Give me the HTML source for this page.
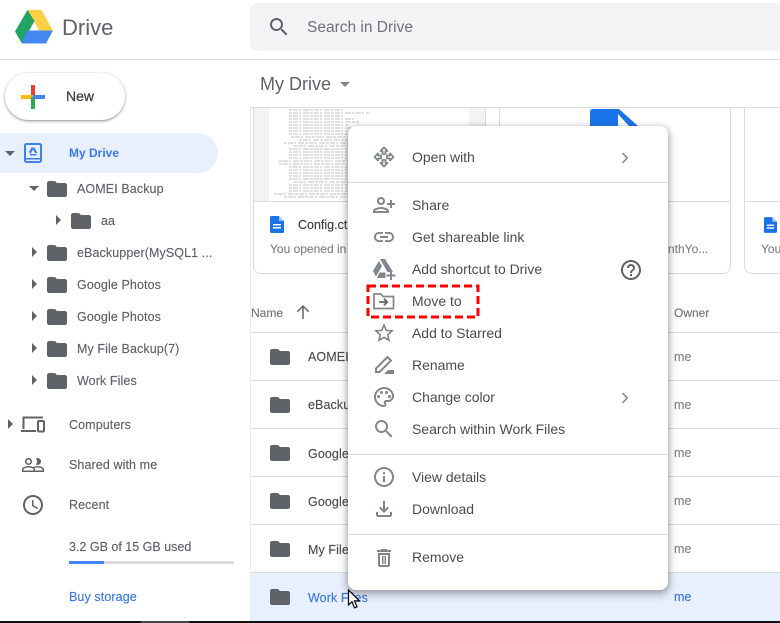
<!DOCTYPE html>
<html><head><meta charset="utf-8">
<style>
html,body{margin:0;padding:0;background:#fff}
#p{position:relative;width:780px;height:623px;overflow:hidden;background:#fff;font-family:"Liberation Sans",sans-serif;font-size:13px;color:#5f6368}
#p div,#p span,#p svg{position:absolute}
.t{line-height:18px;height:18px;white-space:nowrap;-webkit-text-stroke:.15px currentColor}
.s{font-size:12.500px;letter-spacing:.1px}
.m{font-size:14px;color:#4a4d50;left:412px;letter-spacing:-.03px;-webkit-text-stroke:0}
.l{background:#dadce0}
.ic{width:24px;height:24px;fill:#80868b}
.f{width:24px;height:24px;fill:#5f6368}
.tri{width:0;height:0;border-top:5px solid transparent;border-bottom:5px solid transparent;border-left:5px solid #5f6368}
.trd{width:0;height:0;border-left:5px solid transparent;border-right:5px solid transparent;border-top:5px solid #5f6368}
</style></head><body><div id="p">

<!-- header -->
<svg style="left:15px;top:10px" width="38" height="34" viewBox="0 0 38 34">
<polygon points="12.5,0 26.5,0 38,20.5 24,20.5" fill="#ffcf48"/>
<polygon points="12.5,0 0,21.5 7,33.500 19.500,11" fill="#21a464"/>
<polygon points="12,20.500 38,20.500 31,33.500 7,33.500" fill="#4688f1"/>
</svg>
<div class="t" style="left:62px;top:14px;font-size:22px;line-height:28px;height:28px;color:#5f6368;-webkit-text-stroke:0">Drive</div>
<div style="left:250px;top:3px;width:540px;height:48px;background:#f1f3f4;border-radius:8px"></div>
<svg class="f" style="left:267px;top:15px" viewBox="0 0 24 24"><path d="M15.500 14h-.79l-.28-.27C15.410 12.590 16 11.110 16 9.500 16 5.910 13.090 3 9.500 3S3 5.910 3 9.500 5.910 16 9.500 16c1.610 0 3.090-.59 4.230-1.570l.27.28v.79l5 4.990L20.490 19l-4.990-5zm-6 0C7.010 14 5 11.990 5 9.500S7.010 5 9.500 5 14 7.010 14 9.500 11.990 14 9.500 14z"/></svg>
<div class="t" style="left:307px;top:19px;font-size:15.500px;color:#6f7276;-webkit-text-stroke:0">Search in Drive</div>
<div class="l" style="left:0;top:59px;width:780px;height:1px"></div>
<div class="t" style="left:260px;top:73px;font-size:18px;line-height:22px;height:22px;color:#5f6368;-webkit-text-stroke:0">My Drive</div>
<div class="trd" style="left:340px;top:82px;border-top-color:#80868b"></div>

<!-- new button -->
<div style="left:5px;top:73px;width:120px;height:47px;border-radius:24px;background:#fff;box-shadow:0 1px 3px rgba(60,64,67,.45),0 1px 1px rgba(60,64,67,.2)"></div>
<svg style="left:21px;top:85px" width="24" height="24" viewBox="0 0 24 24">
<rect x="10" y="0" width="4" height="12" fill="#ea4335"/>
<rect x="0" y="10" width="12" height="4" fill="#fbbc04"/>
<rect x="10" y="12" width="4" height="12" fill="#34a853"/>
<rect x="12" y="10" width="12" height="4" fill="#4285f4"/>
</svg>
<div class="t" style="left:66px;top:87px;font-size:14px;color:#3c4043;-webkit-text-stroke:.25px #3c4043">New</div>

<!-- sidebar -->
<div style="left:0;top:133px;width:218px;height:40px;background:#e8f0fe;border-radius:0 20px 20px 0"></div>
<div class="trd" style="left:5px;top:151px"></div>
<svg style="left:24px;top:143px" width="18" height="20" viewBox="0 0 18 20">
<rect x="1" y="1" width="16" height="18" rx="1.500" fill="none" stroke="#3b82f0" stroke-width="2"/>
<rect x="1" y="15" width="16" height="1.500" fill="#3b82f0"/>
<path d="M7.500 4.500h3l3 5.500h-2.500L9 6.500 6.500 11 5 9z M6.500 11h6.500l-1 1.500H5.500z" fill="#3b82f0"/>
</svg>
<div class="t" style="left:69px;top:144px;font-size:12px;font-weight:bold;color:#3b78e7;-webkit-text-stroke:0">My Drive</div>

<div class="trd" style="left:29px;top:186px"></div>
<svg class="f" style="left:45px;top:177px" viewBox="0 0 24 24"><use href="#fd"/></svg>
<div class="t s" style="left:77px;top:180px">AOMEI Backup</div>

<div class="tri" style="left:56px;top:215px"></div>
<svg class="f" style="left:69px;top:209px" viewBox="0 0 24 24"><use href="#fd"/></svg>
<div class="t s" style="left:101px;top:212px">aa</div>

<div class="tri" style="left:32px;top:247px"></div>
<svg class="f" style="left:45px;top:241px" viewBox="0 0 24 24"><use href="#fd"/></svg>
<div class="t s" style="left:77px;top:244px">eBackupper(MySQL1 ...</div>

<div class="tri" style="left:32px;top:279px"></div>
<svg class="f" style="left:45px;top:273px" viewBox="0 0 24 24"><use href="#fd"/></svg>
<div class="t s" style="left:77px;top:276px">Google Photos</div>

<div class="tri" style="left:32px;top:311px"></div>
<svg class="f" style="left:45px;top:305px" viewBox="0 0 24 24"><use href="#fd"/></svg>
<div class="t s" style="left:77px;top:308px">Google Photos</div>

<div class="tri" style="left:32px;top:343px"></div>
<svg class="f" style="left:45px;top:337px" viewBox="0 0 24 24"><use href="#fd"/></svg>
<div class="t s" style="left:77px;top:340px">My File Backup(7)</div>

<div class="tri" style="left:32px;top:375px"></div>
<svg class="f" style="left:45px;top:369px" viewBox="0 0 24 24"><use href="#fd"/></svg>
<div class="t s" style="left:77px;top:372px">Work Files</div>

<div class="tri" style="left:8px;top:419px"></div>
<svg style="left:21px;top:416px" width="24" height="17" viewBox="0 0 24 17" fill="none" stroke="#5f6368" stroke-width="2">
<path d="M2.500 13V1.500H22"/><path d="M0 15h15"/><rect x="17" y="5" width="6" height="10.500" rx="1"/>
</svg>
<div class="t s" style="left:69px;top:416px">Computers</div>

<svg class="f" style="left:21px;top:453px" viewBox="0 0 24 24"><path d="M16.500 13c-1.200 0-3.070.34-4.500 1-1.430-.67-3.300-1-4.500-1C5.330 13 1 14.080 1 16.250V19h22v-2.750c0-2.170-4.330-3.250-6.500-3.250zm-4 4.500h-10v-1.250c0-.54 2.560-1.750 5-1.750s5 1.210 5 1.750v1.250zm9 0H14v-1.250c0-.46-.2-.86-.52-1.220.88-.3 1.960-.53 3.020-.53 2.440 0 5 1.210 5 1.750v1.250zM7.500 12c1.930 0 3.500-1.570 3.500-3.500S9.430 5 7.500 5 4 6.570 4 8.500 5.570 12 7.500 12zm0-5.500c1.100 0 2 .9 2 2s-.9 2-2 2-2-.9-2-2 .9-2 2-2zm9 5.500c1.930 0 3.500-1.570 3.500-3.500S18.430 5 16.500 5c-.54 0-1.040.13-1.500.35.63.89 1 1.980 1 3.150s-.37 2.260-1 3.150c.46.220.96.350 1.500.350z"/></svg>
<div class="t s" style="left:69px;top:456px">Shared with me</div>

<svg class="f" style="left:21px;top:493px" viewBox="0 0 24 24"><path d="M11.990 2C6.470 2 2 6.480 2 12s4.470 10 9.990 10C17.520 22 22 17.520 22 12S17.520 2 11.990 2zM12 20c-4.420 0-8-3.580-8-8s3.580-8 8-8 8 3.580 8 8-3.580 8-8 8zm.5-13H11v6l5.250 3.150.75-1.230-4.500-2.670z"/></svg>
<div class="t s" style="left:69px;top:496px">Recent</div>

<div class="t" style="left:69px;top:538px;font-size:12.500px">3.2 GB of 15 GB used</div>
<div style="left:69px;top:561px;width:165px;height:3px;background:#dadce0"></div>
<div style="left:69px;top:561px;width:35px;height:3px;background:#4285f4"></div>
<div class="t s" style="left:69px;top:588px;color:#3b78e7">Buy storage</div>

<!-- content -->
<div class="l" style="left:250px;top:107px;width:530px;height:1px"></div>
<div style="left:250px;top:107px;width:1px;height:516px;background:#e8eaed"></div>

<!-- cards -->
<div style="left:253px;top:107px;width:231px;height:165px;border:1px solid #dadce0;border-radius:0 0 8px 8px;background:#fff;overflow:hidden">
 <div style="left:0;top:0;width:231px;height:93px;background:#f1f3f4"></div>
 <div style="left:15px;top:0;width:200px;height:93px;background:#fff"></div>
 <svg style="left:15px;top:0" width="200" height="93" viewBox="0 0 200 93" fill="none" stroke="#666" stroke-width="1" stroke-opacity=".4" stroke-dasharray="3 1 5 1 2 2 6 1">
 <path d="M20 2h55M20 5h80M20 8h55M20 11h65M20 14h70M20 17h60M20 20h85M20 23h100M20 26h70M22 29h75M30 32h100M15 35h110M25 38h75M20 41h85M20 44h90M20 47h100M20 50h90M10 53h110M10 56h100M20 59h70M20 62h75M20 65h90M20 68h85M20 71h70M25 74h70M20 77h65M20 80h80M20 83h60M5 86h110M15 89h100"/>
 </svg>
 <div class="l" style="left:0;top:93px;width:231px;height:1px"></div>
</div>
<svg style="left:270px;top:216px" width="14" height="17" viewBox="0 0 14 17"><path d="M1.500 0H9l5 5v10.500a1.500 1.500 0 0 1-1.500 1.500h-11A1.500 1.500 0 0 1 0 15.500v-14A1.500 1.500 0 0 1 1.500 0z" fill="#1a73e8"/><path d="M9 0v5h5z" fill="#a8c7fa"/><rect x="3" y="8" width="8" height="1.500" fill="#fff"/><rect x="3" y="11" width="8" height="1.500" fill="#fff"/></svg>
<div class="t" style="left:298px;top:216px;font-size:12.500px;color:#3c4043">Config.ct</div>
<div class="t" style="left:270px;top:240px;font-size:12px;color:#80868b">You opened in</div>

<div style="left:499px;top:107px;width:230px;height:165px;border:1px solid #dadce0;border-radius:0 0 8px 8px;background:#fff;overflow:hidden">
 <div class="l" style="left:0;top:93px;width:230px;height:1px"></div>
</div>
<svg style="left:590px;top:108px" width="50" height="20"><path d="M3 1H29L48 18H39L28 6V18H0V4Q0 1 3 1z" fill="#1a73e8"/></svg>
<div class="t" style="left:668px;top:240px;font-size:12px;color:#80868b">nthYo...</div>

<div style="left:744px;top:107px;width:60px;height:165px;border:1px solid #dadce0;border-radius:0 0 0 8px;background:#fff;overflow:hidden">
 <div class="l" style="left:0;top:93px;width:60px;height:1px"></div>
</div>
<svg style="left:764px;top:217px" width="13" height="16" viewBox="0 0 14 17"><path d="M1.500 0H9l5 5v10.500a1.500 1.500 0 0 1-1.500 1.500h-11A1.500 1.500 0 0 1 0 15.500v-14A1.500 1.500 0 0 1 1.500 0z" fill="#1a73e8"/><path d="M9 0v5h5z" fill="#a8c7fa"/><rect x="3" y="8" width="8" height="1.500" fill="#fff"/><rect x="3" y="11" width="8" height="1.500" fill="#fff"/></svg>
<div class="t" style="left:761px;top:240px;font-size:12px;color:#80868b">You</div>

<!-- list -->
<div class="t" style="left:251px;top:304px;font-size:12px;color:#70757a">Name</div>
<svg style="left:295px;top:304px" width="16" height="16" viewBox="0 0 16 16" fill="#5f6368"><path d="M7.250 15V3.800L2.800 8.200 1.800 7.200 8 1l6.200 6.200-1 1-4.450-4.400V15z"/></svg>
<div class="t" style="left:674px;top:304px;font-size:12px;color:#70757a">Owner</div>

<div style="left:251px;top:573px;width:529px;height:48px;background:#e8f0fe"></div>
<div class="l" style="left:251px;top:332px;width:529px;height:1px"></div>
<div class="l" style="left:251px;top:380px;width:529px;height:1px"></div>
<div class="l" style="left:251px;top:428px;width:529px;height:1px"></div>
<div class="l" style="left:251px;top:476px;width:529px;height:1px"></div>
<div class="l" style="left:251px;top:524px;width:529px;height:1px"></div>
<div class="l" style="left:251px;top:572px;width:529px;height:1px"></div>

<svg class="f" style="left:268px;top:345px" viewBox="0 0 24 24"><use href="#fd"/></svg>
<svg class="f" style="left:268px;top:393px" viewBox="0 0 24 24"><use href="#fd"/></svg>
<svg class="f" style="left:268px;top:441px" viewBox="0 0 24 24"><use href="#fd"/></svg>
<svg class="f" style="left:268px;top:489px" viewBox="0 0 24 24"><use href="#fd"/></svg>
<svg class="f" style="left:268px;top:537px" viewBox="0 0 24 24"><use href="#fd"/></svg>
<svg class="f" style="left:268px;top:585px" viewBox="0 0 24 24"><use href="#fd"/></svg>

<div class="t s" style="left:308px;top:348px;color:#4a4d50">AOMEI</div>
<div class="t s" style="left:308px;top:396px;color:#4a4d50">eBackupper</div>
<div class="t s" style="left:308px;top:445px;color:#4a4d50">Google</div>
<div class="t s" style="left:308px;top:493px;color:#4a4d50">Google</div>
<div class="t s" style="left:308px;top:541px;color:#4a4d50">My File</div>
<div class="t s" style="left:308px;top:589px;color:#3b78e7">Work Files</div>

<div class="t" style="left:674px;top:348px;font-size:12.500px;color:#80868b">me</div>
<div class="t" style="left:674px;top:396px;font-size:12.500px;color:#80868b">me</div>
<div class="t" style="left:674px;top:444px;font-size:12.500px;color:#80868b">me</div>
<div class="t" style="left:674px;top:492px;font-size:12.500px;color:#80868b">me</div>
<div class="t" style="left:674px;top:540px;font-size:12.500px;color:#80868b">me</div>
<div class="t" style="left:674px;top:588px;font-size:12.500px;color:#3b78e7">me</div>

<!-- context menu -->
<div style="left:348px;top:126px;width:320px;height:464px;background:#fff;border-radius:8px;box-shadow:0 4px 8px 2px rgba(60,64,67,.28),0 1px 6px rgba(60,64,67,.3)"></div>
<div class="l" style="left:348px;top:182px;width:320px;height:1px"></div>
<div class="l" style="left:348px;top:454px;width:320px;height:1px"></div>
<div class="l" style="left:348px;top:534px;width:320px;height:1px"></div>

<svg style="left:372px;top:145px" width="24" height="24" viewBox="0 0 24 24" fill="none" stroke="#80868b" stroke-width="1.800" stroke-linejoin="round"><path d="M12 2.500l3.500 3.500H13.500v3h-3V6H8.500zM12 21.500l3.500-3.500H13.500v-3h-3v3H8.500zM2.500 12L6 8.500v2h3v3H6v2zM21.500 12L18 8.500v2h-3v3h3v2z"/></svg>
<div class="t m" style="top:148px">Open with</div>
<svg style="left:620px;top:152px" width="10" height="12" viewBox="0 0 10 12" fill="none" stroke="#80868b" stroke-width="1.600"><path d="M2.500 1l4.700 5-4.700 5"/></svg>

<svg class="ic" style="left:372px;top:193px" viewBox="0 0 24 24"><path transform="translate(24 0) scale(-1 1)" d="M15 12c2.210 0 4-1.790 4-4s-1.790-4-4-4-4 1.790-4 4 1.790 4 4 4zm0-6c1.100 0 2 .9 2 2s-.9 2-2 2-2-.9-2-2 .9-2 2-2zm0 8c-2.670 0-8 1.340-8 4v2h16v-2c0-2.660-5.330-4-8-4zm-6 4c.22-.72 3.310-2 6-2 2.700 0 5.800 1.290 6 2H9zm-3-3v-3h3v-2H6V7H4v3H1v2h3v3h2z"/></svg>
<div class="t m" style="top:196px">Share</div>

<svg class="ic" style="left:372px;top:225px" viewBox="0 0 24 24"><path d="M3.900 12c0-1.710 1.390-3.100 3.100-3.100h4V7H7c-2.760 0-5 2.240-5 5s2.240 5 5 5h4v-1.900H7c-1.710 0-3.100-1.390-3.100-3.100zM8 13h8v-2H8v2zm9-6h-4v1.900h4c1.710 0 3.100 1.390 3.100 3.100s-1.390 3.100-3.100 3.100h-4V17h4c2.760 0 5-2.240 5-5s-2.240-5-5-5z"/></svg>
<div class="t m" style="top:228px">Get shareable link</div>

<svg style="left:372px;top:258px" width="24" height="22" viewBox="0 0 24 22" fill="#80868b"><path d="M8 1h5l8 13h-5.500zM6.800 3L1 13l3 5.500L10 8zM7.500 14.500h6v5.500H5z"/><path d="M18 13h2v3.500h3.500v2H20V22h-2v-3.500h-3.500v-2H18z"/></svg>
<div class="t m" style="top:260px">Add shortcut to Drive</div>
<svg style="left:619px;top:258px" width="24" height="24" viewBox="0 0 24 24" fill="#5f6368"><path d="M11 18h2v-2h-2v2zm1-16C6.480 2 2 6.480 2 12s4.480 10 10 10 10-4.480 10-10S17.520 2 12 2zm0 18c-4.410 0-8-3.590-8-8s3.590-8 8-8 8 3.590 8 8-3.590 8-8 8zm0-14c-2.210 0-4 1.790-4 4h2c0-1.100.9-2 2-2s2 .9 2 2c0 2-3 1.750-3 5h2c0-2.250 3-2.500 3-5 0-2.210-1.790-4-4-4z"/></svg>

<svg style="left:372px;top:289px" width="24" height="24" viewBox="0 0 24 24" fill="none" stroke="#80868b" stroke-width="1.700"><path d="M2 5h7l2 2.500h10.500V19.500H2z"/><path d="M7 13h8M12 9.800l3.200 3.200-3.200 3.200" stroke="#5f6368" stroke-width="1.800"/></svg>
<div class="t m" style="top:292px">Move to</div>
<svg style="left:366px;top:284px" width="114" height="35" viewBox="0 0 114 35" fill="none" stroke="#f00" stroke-width="3" stroke-dasharray="8 4"><rect x="2" y="2" width="110" height="31"/></svg>

<svg class="ic" style="left:372px;top:321px" viewBox="0 0 24 24"><path d="M22 9.240l-7.190-.62L12 2 9.190 8.630 2 9.240l5.460 4.730L5.820 21 12 17.270 18.180 21l-1.630-7.030L22 9.240zM12 15.400l-3.760 2.270 1-4.280-3.320-2.880 4.380-.38L12 6.100l1.710 4.040 4.380.38-3.320 2.880 1 4.280L12 15.400z"/></svg>
<div class="t m" style="top:324px">Add to Starred</div>

<svg style="left:372px;top:353px" width="24" height="24" viewBox="0 0 24 24"><path d="M4 15.500L15.500 4l3.500 3.500L7.500 19H4z" fill="none" stroke="#80868b" stroke-width="2"/><path d="M12 21l4-4h6v4z" fill="#80868b"/></svg>
<div class="t m" style="top:356px">Rename</div>

<svg class="ic" style="left:372px;top:385px" viewBox="0 0 24 24"><path d="M12 22C6.490 22 2 17.510 2 12S6.490 2 12 2s10 4.040 10 9c0 3.310-2.690 6-6 6h-1.770c-.28 0-.5.220-.5.500 0 .12.050.23.130.33.410.47.640 1.060.640 1.670A2.500 2.500 0 0 1 12 22zm0-18c-4.410 0-8 3.590-8 8s3.590 8 8 8c.28 0 .5-.22.500-.5a.54.540 0 0 0-.14-.35c-.41-.46-.63-1.050-.63-1.650a2.500 2.500 0 0 1 2.500-2.500H16c2.210 0 4-1.790 4-4 0-3.860-3.590-7-8-7z"/><circle cx="6.500" cy="11.500" r="1.500"/><circle cx="9.500" cy="7.500" r="1.500"/><circle cx="14.500" cy="7.500" r="1.500"/><circle cx="17.500" cy="11.500" r="1.500"/></svg>
<div class="t m" style="top:388px">Change color</div>
<svg style="left:620px;top:392px" width="10" height="12" viewBox="0 0 10 12" fill="none" stroke="#80868b" stroke-width="1.600"><path d="M2.500 1l4.700 5-4.700 5"/></svg>

<svg class="ic" style="left:372px;top:417px" viewBox="0 0 24 24"><path d="M15.500 14h-.79l-.28-.27C15.410 12.590 16 11.110 16 9.500 16 5.910 13.090 3 9.500 3S3 5.910 3 9.500 5.910 16 9.500 16c1.610 0 3.090-.59 4.230-1.570l.27.28v.79l5 4.990L20.490 19l-4.990-5zm-6 0C7.010 14 5 11.990 5 9.500S7.010 5 9.500 5 14 7.010 14 9.500 11.990 14 9.500 14z"/></svg>
<div class="t m" style="top:420px">Search within Work Files</div>

<svg class="ic" style="left:372px;top:465px" viewBox="0 0 24 24"><path d="M11 7h2v2h-2zm0 4h2v6h-2zm1-9C6.480 2 2 6.480 2 12s4.480 10 10 10 10-4.480 10-10S17.520 2 12 2zm0 18c-4.410 0-8-3.590-8-8s3.590-8 8-8 8 3.590 8 8-3.590 8-8 8z"/></svg>
<div class="t m" style="top:468px">View details</div>

<svg class="ic" style="left:372px;top:497px" viewBox="0 0 24 24"><path d="M18 15v3H6v-3H4v3c0 1.100.9 2 2 2h12c1.100 0 2-.9 2-2v-3h-2zm-1-4l-1.410-1.410L13 12.170V4h-2v8.170L8.410 9.590 7 11l5 5 5-5z"/></svg>
<div class="t m" style="top:500px">Download</div>

<svg class="ic" style="left:372px;top:546px" viewBox="0 0 24 24"><path d="M6 19c0 1.100.9 2 2 2h8c1.100 0 2-.9 2-2V7H6v12zM8 9h8v10H8V9zm7.500-5l-1-1h-5l-1 1H5v2h14V4h-3.500z"/><rect x="10" y="10" width="1.500" height="8"/><rect x="12.500" y="10" width="1.500" height="8"/></svg>
<div class="t m" style="top:548px">Remove</div>

<!-- cursor -->
<svg style="left:347px;top:589px" width="14" height="22" viewBox="0 0 14 22"><path d="M1.500 1v15l3.500-3.200 2.500 6 2.500-1-2.500-6h4.800z" fill="#fff" stroke="#000" stroke-width="1.200"/></svg>

<!-- bottom edge -->
<div style="left:0;top:621px;width:780px;height:2px;background:#111"></div>
<div style="left:141px;top:621px;width:48px;height:2px;background:#444"></div>

<svg width="0" height="0" style="left:0;top:0"><defs><path id="fd" d="M10 4H4c-1.100 0-2 .9-2 2v12c0 1.100.9 2 2 2h16c1.100 0 2-.9 2-2V8c0-1.100-.9-2-2-2h-8l-2-2z"/></defs></svg>
</div></body></html>
